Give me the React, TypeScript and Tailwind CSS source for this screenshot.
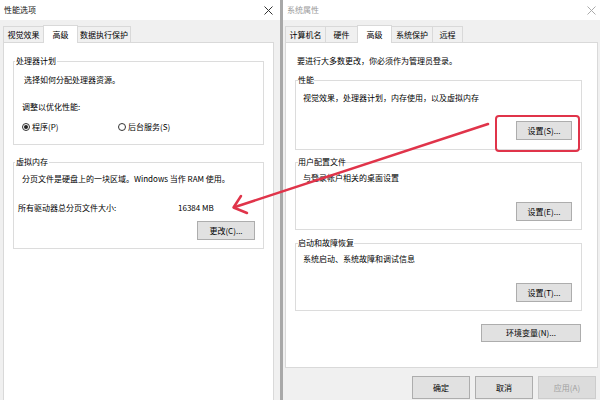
import React from "react";

function XIcon({ color }: { color: string }) {
  return (
    <svg width="9" height="9" viewBox="0 0 9 9">
      <path d="M0.5 0.5 L8.5 8.5 M8.5 0.5 L0.5 8.5" stroke={color} strokeWidth="1" fill="none" />
    </svg>
  );
}

function Tab({ label, active, w }: { label: string; active?: boolean; w: string }) {
  if (active) {
    return (
      <div className={`${w} h-[18px] bg-white border border-b-0 border-[#d9d9d9] -mb-px -ml-px relative z-10 flex items-center justify-center`}>
        {label}
      </div>
    );
  }
  return (
    <div className={`${w} h-[16px] bg-[#f0f0f0] border border-b-0 border-[#d9d9d9] -ml-px first:ml-0 flex items-center justify-center`}>
      {label}
    </div>
  );
}

function Btn({ label, w, h = "h-[19px]", disabled }: { label: string; w: string; h?: string; disabled?: boolean }) {
  return (
    <div
      className={`${w} ${h} flex items-center justify-center border ${
        disabled ? "bg-[#dcdcdc] border-[#cccccc] text-[#a0a0a0]" : "bg-[#e1e1e1] border-[#adadad] text-black"
      }`}
    >
      {label}
    </div>
  );
}

function Radio({ checked }: { checked?: boolean }) {
  return (
    <div className="w-[8px] h-[8px] rounded-full border border-[#333] flex items-center justify-center bg-white">
      {checked && <div className="w-[4px] h-[4px] rounded-full bg-[#222]" />}
    </div>
  );
}

export default function App() {
  return (
    <div className="relative flex w-[600px] h-[400px] overflow-hidden bg-[#f0f0f0] font-['Noto_Sans_CJK_SC','Noto_Sans',sans-serif] text-[8px] leading-[12px] text-black">
      {/* Left window: 性能选项 */}
      <div className="w-[280px] flex flex-col bg-[#f0f0f0]">
        <div className="h-[20px] bg-white flex items-center justify-between pl-[4px] pr-[7px]">
          <span className="text-[#111]">性能选项</span>
          <XIcon color="#333" />
        </div>
        <div className="h-[22px] flex items-end pl-[3px]">
          <Tab label="视觉效果" w="w-[41px]" />
          <Tab label="高级" w="w-[35px]" active />
          <Tab label="数据执行保护" w="w-[54px]" />
        </div>
        <div className="flex-1 ml-[3px] mr-[6px] bg-white border border-b-0 border-[#d9d9d9] flex flex-col">
          <fieldset className="mt-[12px] mx-[9px] border border-[#dcdcdc] pl-[1px] pb-[11px]">
            <legend className="leading-[12px] px-[1px]">处理器计划</legend>
            <p className="mt-[7px] pl-[9px]">选择如何分配处理器资源。</p>
            <p className="mt-[15px] pl-[7px]">调整以优化性能:</p>
            <div className="mt-[8px] pl-[7px] flex items-center">
              <div className="w-[96px] flex items-center gap-[2px]">
                <Radio checked />
                <span>程序(P)</span>
              </div>
              <div className="flex items-center gap-[2px]">
                <Radio />
                <span>后台服务(S)</span>
              </div>
            </div>
          </fieldset>
          <fieldset className="mt-[11px] mx-[9px] border border-[#dcdcdc] pl-[1px] pb-[8px]">
            <legend className="leading-[12px] px-[1px]">虚拟内存</legend>
            <p className="mt-[5px] pl-[7px]">分页文件是硬盘上的一块区域。Windows 当作 RAM 使用。</p>
            <div className="mt-[17px] pl-[3px] flex">
              <span className="w-[160px]">所有驱动器总分页文件大小:</span>
              <span>16384 MB</span>
            </div>
            <div className="mt-[7px] flex justify-end pr-[8px]">
              <Btn label="更改(C)..." w="w-[58px]" />
            </div>
          </fieldset>
        </div>
      </div>

      {/* separator */}
      <div className="w-[3px] bg-[#a8a8a8]" />

      {/* Right window: 系统属性 */}
      <div className="flex-1 flex flex-col bg-[#f0f0f0]">
        <div className="h-[20px] bg-white flex items-center justify-between pl-[4px] pr-[4px]">
          <span className="text-[#9a9a9a]">系统属性</span>
          <XIcon color="#aaaaaa" />
        </div>
        <div className="h-[22px] flex items-end pl-[2px]">
          <Tab label="计算机名" w="w-[41px]" />
          <Tab label="硬件" w="w-[33px]" />
          <Tab label="高级" w="w-[35px]" active />
          <Tab label="系统保护" w="w-[42px]" />
          <Tab label="远程" w="w-[31px]" />
        </div>
        <div className="h-[326px] mx-[2px] bg-white border border-[#d9d9d9] flex flex-col">
          <p className="mt-[12px] pl-[11px]">要进行大多数更改，你必须作为管理员登录。</p>
          <fieldset className="mt-[7px] ml-[9px] mr-[15px] border border-[#dcdcdc] pl-[2px] pb-[9px]">
            <legend className="leading-[12px]">性能</legend>
            <p className="mt-[6px] pl-[5px]">视觉效果，处理器计划，内存使用，以及虚拟内存</p>
            <div className="mt-[17px] flex justify-end pr-[9px]">
              <Btn label="设置(S)..." w="w-[56px]" />
            </div>
          </fieldset>
          <fieldset className="mt-[6px] ml-[9px] mr-[15px] border border-[#dcdcdc] pl-[2px] pb-[8px]">
            <legend className="leading-[12px]">用户配置文件</legend>
            <p className="mt-[4px] pl-[5px]">与登录帐户相关的桌面设置</p>
            <div className="mt-[18px] flex justify-end pr-[9px]">
              <Btn label="设置(E)..." w="w-[56px]" />
            </div>
          </fieldset>
          <fieldset className="mt-[7px] ml-[9px] mr-[15px] border border-[#dcdcdc] pl-[2px] pb-[8px]">
            <legend className="leading-[12px]">启动和故障恢复</legend>
            <p className="mt-[4px] pl-[5px]">系统启动、系统故障和调试信息</p>
            <div className="mt-[18px] flex justify-end pr-[9px]">
              <Btn label="设置(T)..." w="w-[56px]" />
            </div>
          </fieldset>
          <div className="mt-[13px] flex justify-end pr-[16px]">
            <Btn label="环境变量(N)..." w="w-[100px]" h="h-[18px]" />
          </div>
        </div>
        <div className="flex-1 flex justify-end items-start gap-[5px] pt-[8px] pr-[4px]">
          <Btn label="确定" w="w-[58px]" h="h-[23px]" />
          <Btn label="取消" w="w-[58px]" h="h-[23px]" />
          <Btn label="应用(A)" w="w-[58px]" h="h-[23px]" disabled />
        </div>
      </div>

      {/* annotations */}
      <div className="absolute left-[495px] top-[115px] w-[85px] h-[37px] border-2 border-[#e0344a] rounded-[4px] pointer-events-none" />
      <svg className="absolute left-0 top-0 pointer-events-none" width="600" height="400" viewBox="0 0 600 400">
        <path d="M488 124 L235 207" stroke="#e0344a" strokeWidth="2.5" strokeLinecap="round" fill="none" />
        <path d="M241 196 L233.5 207.5 L247 213" stroke="#e0344a" strokeWidth="2.5" strokeLinecap="round" strokeLinejoin="round" fill="none" />
      </svg>
    </div>
  );
}
